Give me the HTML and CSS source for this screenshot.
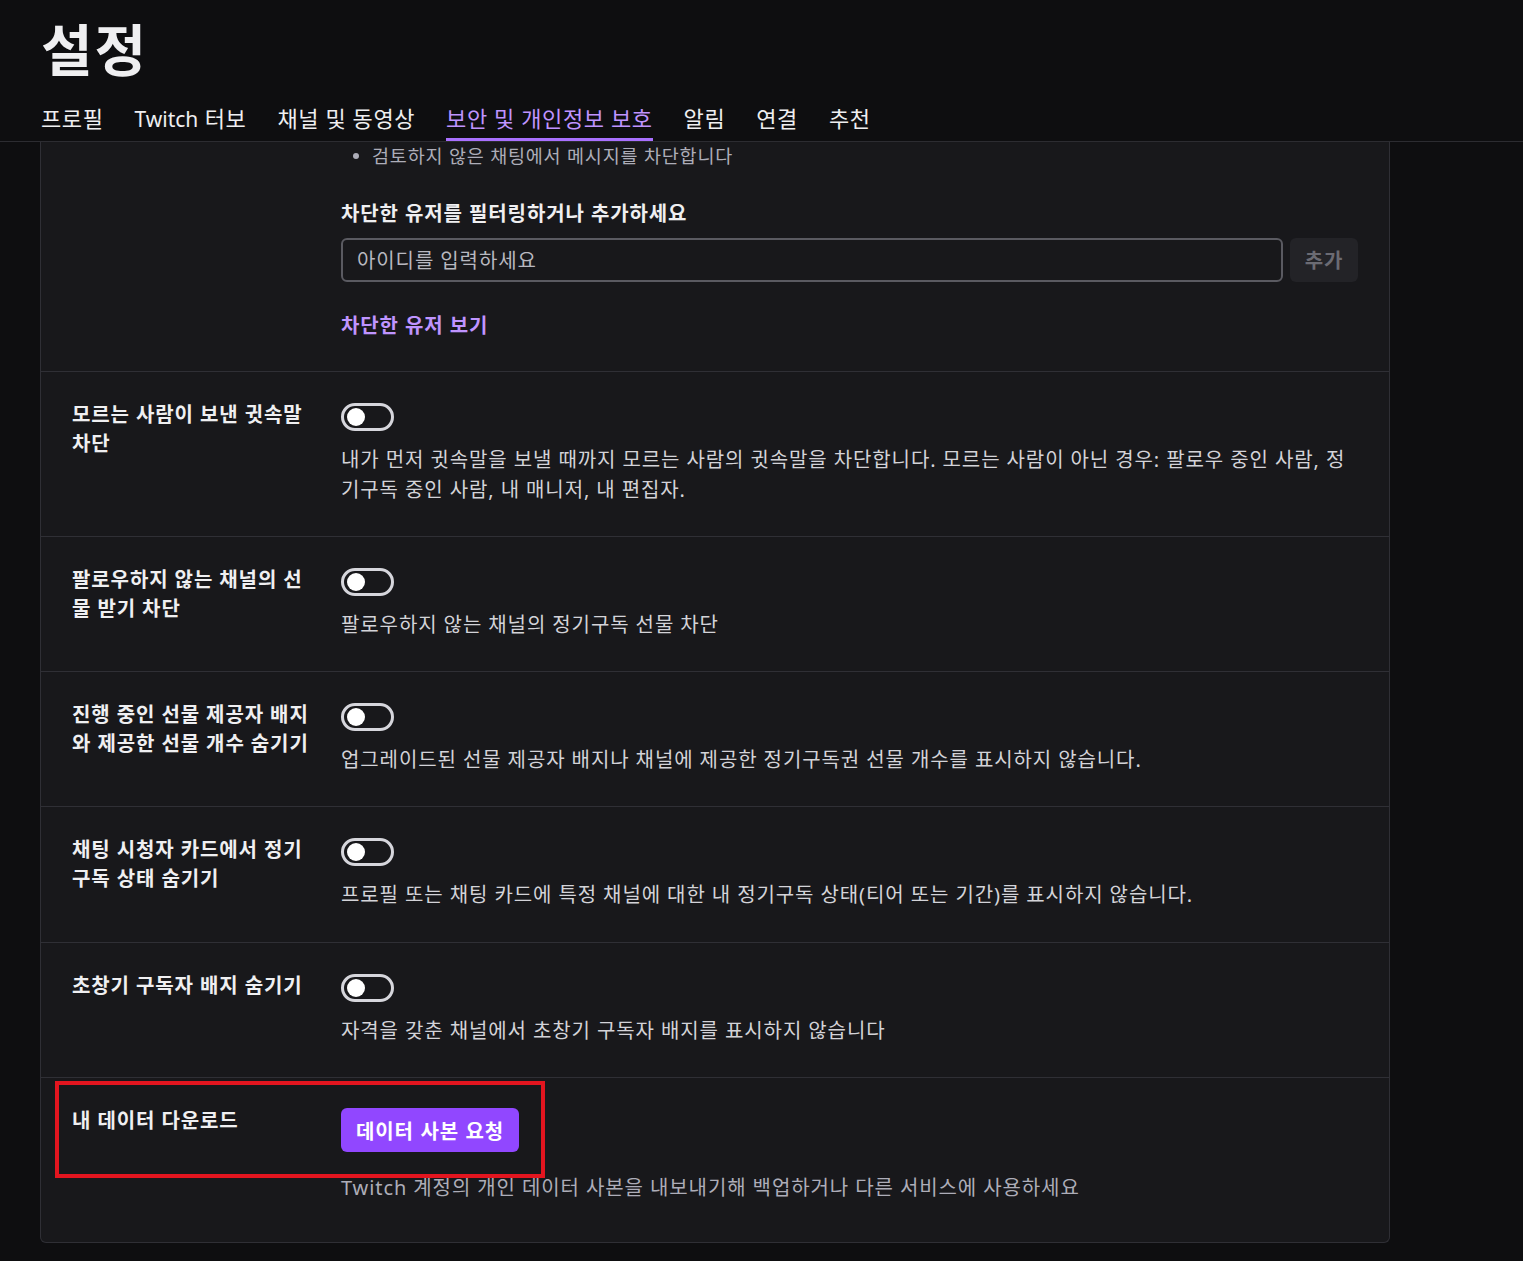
FILE: index.html
```html
<!DOCTYPE html>
<html lang="ko">
<head>
<meta charset="utf-8">
<title>설정</title>
<link rel="stylesheet" href="styles.css">
</head>
<body>
<header class="header">
  <h1 class="title">설정</h1>
  <nav class="tabs">
    <a class="tab">프로필</a>
    <a class="tab"><span class="latin">Twitch</span> 터보</a>
    <a class="tab">채널 및 동영상</a>
    <a class="tab tab-active">보안 및 개인정보 보호</a>
    <a class="tab">알림</a>
    <a class="tab">연결</a>
    <a class="tab">추천</a>
  </nav>
</header>
<main class="card">
  <section class="row row-first">
    <div class="label"></div>
    <div class="content">
      <ul class="bullets">
        <li class="bullet"><span class="dot"></span>검토하지 않은 채팅에서 메시지를 차단합니다</li>
      </ul>
      <div class="field-title">차단한 유저를 필터링하거나 추가하세요</div>
      <div class="input-row">
        <div class="input">아이디를 입력하세요</div>
        <button class="btn-add">추가</button>
      </div>
      <a class="link">차단한 유저 보기</a>
    </div>
  </section>
  <section class="row">
    <div class="label">모르는 사람이 보낸 귓속말 차단</div>
    <div class="content">
      <div class="toggle"><span class="knob"></span></div>
      <p class="desc">내가 먼저 귓속말을 보낼 때까지 모르는 사람의 귓속말을 차단합니다. 모르는 사람이 아닌 경우: 팔로우 중인 사람, 정기구독 중인 사람, 내 매니저, 내 편집자.</p>
    </div>
  </section>
  <section class="row">
    <div class="label">팔로우하지 않는 채널의 선물 받기 차단</div>
    <div class="content">
      <div class="toggle"><span class="knob"></span></div>
      <p class="desc">팔로우하지 않는 채널의 정기구독 선물 차단</p>
    </div>
  </section>
  <section class="row">
    <div class="label">진행 중인 선물 제공자 배지와 제공한 선물 개수 숨기기</div>
    <div class="content">
      <div class="toggle"><span class="knob"></span></div>
      <p class="desc">업그레이드된 선물 제공자 배지나 채널에 제공한 정기구독권 선물 개수를 표시하지 않습니다.</p>
    </div>
  </section>
  <section class="row row-tall">
    <div class="label">채팅 시청자 카드에서 정기구독 상태 숨기기</div>
    <div class="content">
      <div class="toggle"><span class="knob"></span></div>
      <p class="desc">프로필 또는 채팅 카드에 특정 채널에 대한 내 정기구독 상태(티어 또는 기간)를 표시하지 않습니다.</p>
    </div>
  </section>
  <section class="row">
    <div class="label">초창기 구독자 배지 숨기기</div>
    <div class="content">
      <div class="toggle"><span class="knob"></span></div>
      <p class="desc">자격을 갖춘 채널에서 초창기 구독자 배지를 표시하지 않습니다</p>
    </div>
  </section>
  <section class="row row-last">
    <div class="label">내 데이터 다운로드</div>
    <div class="content">
      <button class="btn-primary">데이터 사본 요청</button>
      <p class="desc desc-dim">Twitch 계정의 개인 데이터 사본을 내보내기해 백업하거나 다른 서비스에 사용하세요</p>
    </div>
    <div class="highlight"></div>
  </section>
</main>
</body>
</html>
```

FILE: styles.css
```css
html, body {
  margin: 0;
  padding: 0;
}
body {
  background: #0e0e10;
  color: #efeff1;
  font-family: "Noto Sans", "Noto Sans CJK KR", sans-serif;
  font-size: 20px;
  letter-spacing: 0.9px;
  width: 1523px;
  height: 1261px;
  overflow: hidden;
}
.header {
  padding: 14px 0 0 41px;
  border-bottom: 1px solid #2c2c31;
}
.title {
  margin: 0;
  font-family: "Noto Sans CJK KR", sans-serif;
  font-size: 56px;
  line-height: 66px;
  font-weight: 700;
  letter-spacing: 2px;
  color: #efeff1;
}
.tabs {
  display: flex;
  gap: 31px;
  margin-top: 23px;
}
.tab {
  font-size: 22px;
  letter-spacing: 0.6px;
  line-height: 30px;
  height: 30px;
  padding-bottom: 5px;
  border-bottom: 3px solid transparent;
  color: #efeff1;
}
.latin {
  font-size: 21px;
  letter-spacing: 0;
  line-height: 1;
}
.tab-active {
  color: #bf94ff;
  border-bottom-color: #a970ff;
}
.card {
  margin-left: 40px;
  width: 1350px;
  box-sizing: border-box;
  background: #18181b;
  border: 1px solid #2f2f35;
  border-top: none;
  border-radius: 0 0 6px 6px;
}
.row {
  display: grid;
  grid-template-columns: 238px 1fr;
  column-gap: 31px;
  padding: 28px 31px 31px 31px;
  border-bottom: 1px solid #2f2f35;
  position: relative;
}
.row:last-child {
  border-bottom: none;
}
.row-first {
  padding-top: 1px;
  padding-bottom: 31px;
}
.row-tall {
  padding-bottom: 32px;
}
.label {
  font-weight: 700;
  line-height: 29px;
  color: #efeff1;
}
.content {
  display: flex;
  flex-direction: column;
  align-items: flex-start;
}
.bullets {
  list-style: none;
  margin: 0;
  padding: 0;
}
.bullet {
  display: flex;
  align-items: center;
  font-size: 18.5px;
  letter-spacing: 0.8px;
  line-height: 26px;
  color: #adadb8;
  padding-left: 12px;
}
.dot {
  width: 6px;
  height: 6px;
  border-radius: 50%;
  background: #adadb8;
  margin-right: 13px;
}
.field-title {
  margin-top: 30px;
  font-weight: 700;
  line-height: 29px;
  color: #efeff1;
}
.input-row {
  margin-top: 10px;
  display: flex;
  gap: 7px;
  width: 100%;
}
.input {
  flex: 1;
  height: 44px;
  box-sizing: border-box;
  border: 2px solid #5a5a61;
  border-radius: 6px;
  padding: 0 14px 2px 14px;
  display: flex;
  align-items: center;
  color: #b8b8c0;
}
.btn-add {
  width: 68px;
  height: 44px;
  border: none;
  border-radius: 6px;
  background: #232327;
  color: #6b6b73;
  font-family: "Noto Sans CJK KR", sans-serif;
  font-weight: 700;
  font-size: 20px;
  letter-spacing: 0.9px;
  padding: 0 0 2px 0;
}
.link {
  margin-top: 29px;
  font-weight: 700;
  line-height: 29px;
  color: #bf94ff;
}
.toggle {
  margin-top: 3px;
  width: 53px;
  height: 28px;
  box-sizing: border-box;
  border: 3px solid #d6d6dc;
  border-radius: 14px;
  display: flex;
  align-items: center;
  padding-left: 3px;
}
.knob {
  width: 18px;
  height: 18px;
  border-radius: 50%;
  background: #ffffff;
}
.desc {
  margin: 14px 0 0 0;
  line-height: 30px;
  color: #d3d3d8;
}
.row-last {
  padding-bottom: 39px;
}
.btn-primary {
  margin-top: 2px;
  height: 44px;
  padding: 0 15px;
  border: none;
  border-radius: 6px;
  background: #9147ff;
  color: #ffffff;
  font-family: "Noto Sans CJK KR", sans-serif;
  font-weight: 700;
  font-size: 20px;
  letter-spacing: 0.9px;
}
.desc-dim {
  margin-top: 21px;
  color: #adadb8;
}
.highlight {
  position: absolute;
  left: 14px;
  top: 3px;
  width: 490px;
  height: 97px;
  box-sizing: border-box;
  border: 4px solid #e3151f;
}
```
